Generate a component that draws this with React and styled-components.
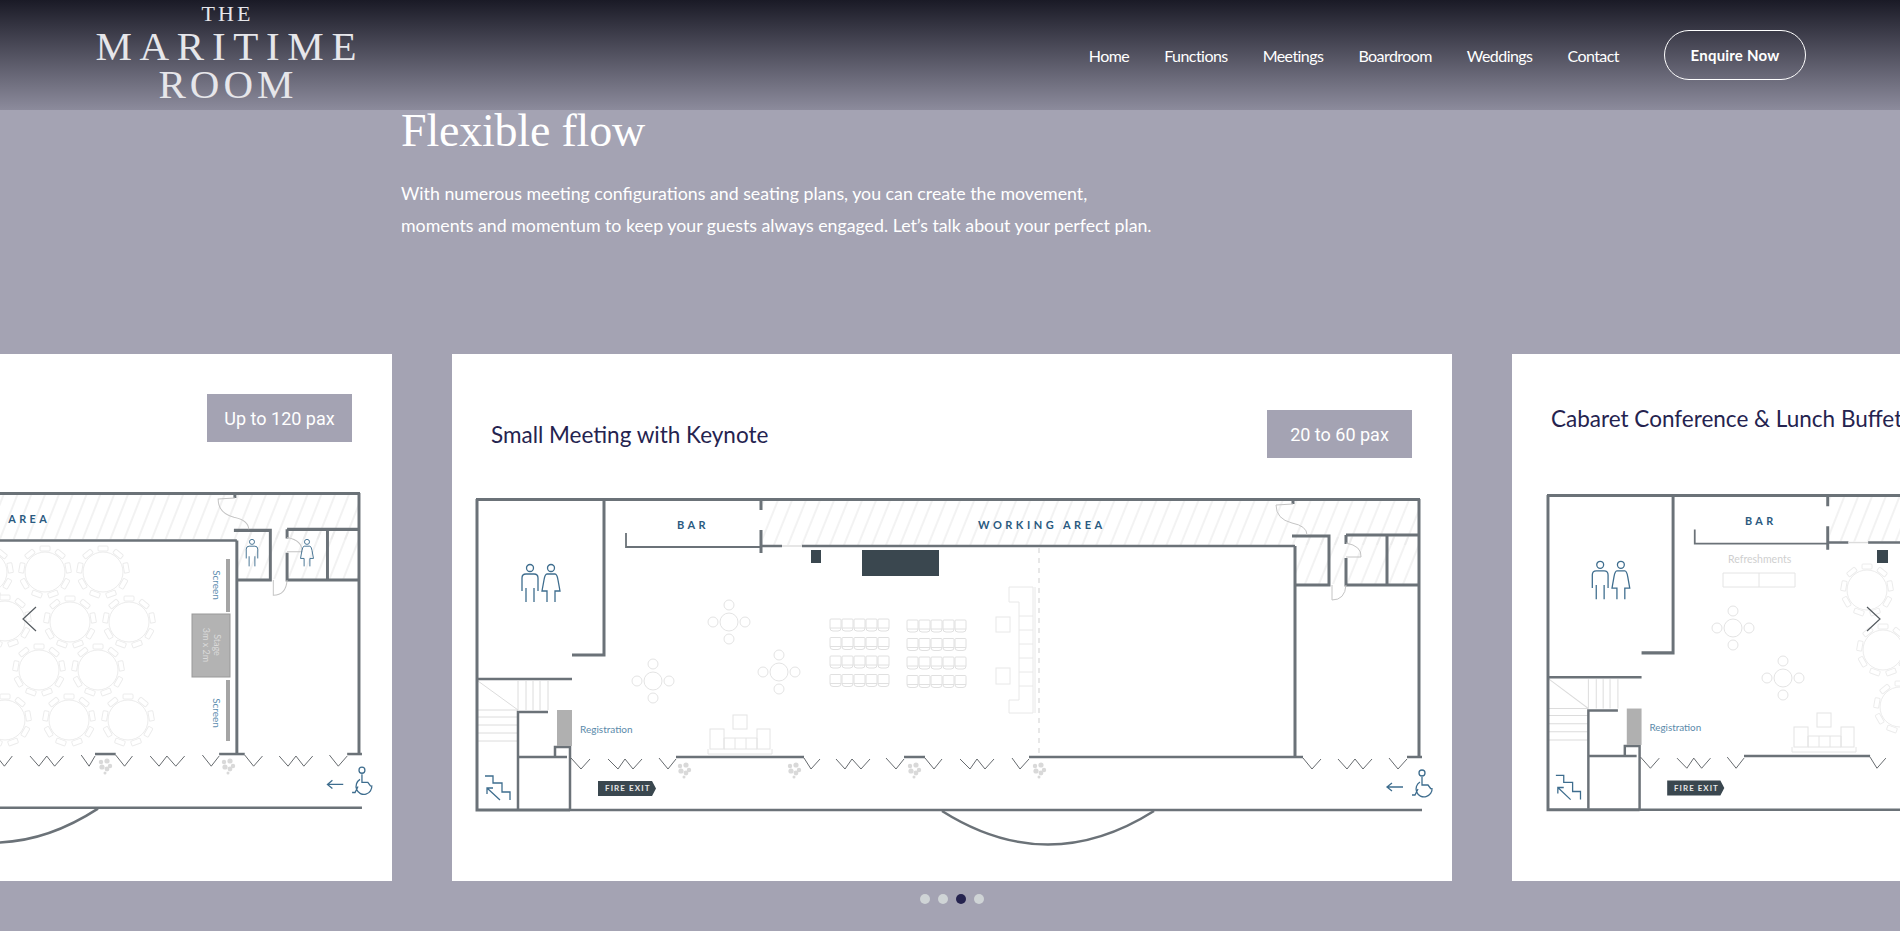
import React from 'react';
import styled, { createGlobalStyle } from 'styled-components';

const Global = createGlobalStyle`
  html, body {
    margin: 0;
    height: 931px;
    overflow: hidden;
    background: #a4a3b3;
  }
`;

const Page = styled.div`
  width: 1900px;
  height: 931px;
  overflow: hidden;
  background: #a4a3b3;
`;

const Header = styled.header`
  height: 110px;
  padding: 0 94px 0 95px;
  box-sizing: border-box;
  display: flex;
  align-items: center;
  justify-content: space-between;
  background: linear-gradient(180deg, #1a1a26 0%, #8c8b9c 100%);
`;

const Logo = styled.div`
  width: 262px;
  display: flex;
  flex-direction: column;
  align-items: center;
  font-family: "Liberation Serif", serif;
  color: #e6e6ea;
  margin-bottom: 7px;
`;

const LogoLine = styled.span`
  font-size: ${p => p.$size}px;
  line-height: ${p => p.$line}px;
  letter-spacing: ${p => p.$spacing}px;
  margin-right: -${p => p.$spacing}px;
  white-space: nowrap;
`;

const NavArea = styled.div`
  display: flex;
  align-items: center;
  gap: 45px;
`;

const Nav = styled.nav`
  display: flex;
  gap: 35px;
`;

const NavLink = styled.a`
  font-family: Lato, sans-serif;
  font-size: 16px;
  color: #fff;
  letter-spacing: -0.56px;
`;

const Enquire = styled.a`
  width: 142px;
  height: 50px;
  box-sizing: border-box;
  border: 1px solid #fff;
  border-radius: 25px;
  display: flex;
  align-items: center;
  justify-content: center;
  font-family: Lato, sans-serif;
  font-weight: 700;
  font-size: 15px;
  letter-spacing: 0.2px;
  color: #fff;
`;

const Intro = styled.section`
  height: 244px;
  padding-left: 401px;
  box-sizing: border-box;
  color: #fff;
`;

const Heading = styled.h2`
  margin: 0;
  font-family: "Liberation Serif", serif;
  font-weight: 400;
  font-size: 46px;
  line-height: 46px;
  height: 44px;
  display: flex;
  align-items: flex-end;
  letter-spacing: -0.2px;
`;

const Copy = styled.p`
  margin: 0;
  padding-top: 23px;
  font-family: Lato, sans-serif;
  font-size: 17.75px;
  line-height: 32px;
`;

const Carousel = styled.div`
  position: relative;
  display: flex;
  gap: 60px;
  margin-left: -608px;
  width: 3120px;
`;

const Card = styled.article`
  flex: 0 0 1000px;
  height: 527px;
  background: #fff;
  display: flex;
  flex-direction: column;
`;

const CardHead = styled.div`
  height: 126px;
  box-sizing: border-box;
  padding: ${p => p.$top}px 40px 0;
  display: flex;
  justify-content: space-between;
  align-items: flex-start;
`;

const CardTitle = styled.h3`
  margin: 1px 0 0 -1px;
  font-family: Lato, sans-serif;
  font-weight: 400;
  font-size: 22.5px;
  line-height: 48px;
  color: #25234f;
  white-space: nowrap;
`;

const Pax = styled.div`
  width: 145px;
  height: 48px;
  margin-left: auto;
  background: #a4a3b3;
  color: #fff;
  display: flex;
  align-items: center;
  justify-content: center;
  font-family: Roboto, sans-serif;
  font-size: 18px;
`;

const Plan = styled.svg`
  display: block;
  width: 1000px;
  height: 401px;
`;

const Walls = styled.g`
  fill: none;
  stroke: #6b7278;
  stroke-width: ${p => p.$w || 3}px;
`;

const Faint = styled.g`
  fill: none;
  stroke: ${p => p.$c || '#e4e4e4'};
  stroke-width: ${p => p.$w || 1}px;
`;

const Blue = styled.g`
  fill: none;
  stroke: #3e6d8e;
  stroke-width: 1.3px;
`;

const Label = styled.text`
  font-family: Lato, sans-serif;
  font-size: ${p => p.$size || 11}px;
  font-weight: ${p => p.$weight || 400};
  letter-spacing: ${p => p.$spacing || 0}px;
  fill: ${p => p.$c || '#2a5a80'};
  dominant-baseline: middle;
`;

const Arrow = styled.svg`
  position: absolute;
  top: 252px;
  left: ${p => p.$left}px;
  width: 16px;
  height: 26px;
  fill: none;
  stroke: #555b60;
  stroke-width: 1.2px;
`;

const Dots = styled.div`
  display: flex;
  justify-content: center;
  gap: 8px;
  padding-top: 13px;
  margin-left: 4px;
`;

const Dot = styled.span`
  width: 10px;
  height: 10px;
  border-radius: 50%;
  background: ${p => (p.$on ? '#25234f' : '#cfd4d6')};
`;

const vee = (a, b, c) => `M${a} 404L${b} 415L${c} 405`;
const wave = (a, b, c, d, e) => `M${a} 405L${b} 415L${c} 405L${d} 415L${e} 405`;

const baseDoors = [
  vee(119, 129, 138), wave(156, 166, 173, 181, 190), vee(207, 216, 224),
  vee(352, 359, 368), wave(384, 393, 400, 409, 418), vee(434, 444, 452),
  vee(473, 482, 490), wave(508, 518, 525, 533, 542), vee(560, 568, 577),
  vee(851, 860, 869), wave(886, 895, 903, 911, 920), vee(937, 946, 955),
];

const extraDoors = [
  vee(598, 607, 615), wave(633, 642, 650, 658, 667), vee(685, 693, 699),
  vee(720, 729, 737), wave(755, 764, 772, 781, 790), vee(808, 817, 825),
];

const Man = ({ x, y, s = 1 }) => (
  <g transform={`translate(${x} ${y}) scale(${s})`}>
    <circle cx="0" cy="4" r="3.5" />
    <path d="M-8 27V14q0-4 4-4h8q4 0 4 4v13M-4 38V24M4 38V24" />
  </g>
);

const Woman = ({ x, y, s = 1 }) => (
  <g transform={`translate(${x} ${y}) scale(${s})`}>
    <circle cx="0" cy="4" r="3.5" />
    <path d="M-4 10h8q2 0 3 6l2 11h-5v11M-4 10q-2 0-3 6l-2 11h5v11" />
  </g>
);

const Wheelchair = () => (
  <Blue>
    <path d="M951 433H935M940 429L935 433L940 437" />
    <circle cx="970" cy="419" r="3" />
    <path d="M970 423V431H976L979 435M968 428A8 8 0 1 0 980 434M960 441H963L966 435" />
  </Blue>
);

const FireExit = () => (
  <g>
    <path d="M146 427H200L204 434.5L200 442H146Z" fill="#3a474f" />
    <Label x="153" y="435" $size={8} $weight={700} $spacing={1.1} $c="#e8e8e8">FIRE EXIT</Label>
  </g>
);

const Stairs = () => (
  <>
    <Faint $c="#dcdcdc">
      <path d="M26 327L66 356M26 356H66M26 363H66M26 371H66M26 379H66M26 387H66" />
      <path d="M66 327V356M74 327V356M81 327V356M88 327V356M96 327V356" />
    </Faint>
    <Blue>
      <path d="M33 422H41V429H50V438H58V446M48 446L35 434M35 440V434H41" />
    </Blue>
  </>
);

const Plant = ({ x, y }) => (
  <g fill="#d9d9d9" transform={`translate(${x} ${y})`}>
    <circle cx="-4" cy="-4" r="2.2" />
    <circle cx="2" cy="-5" r="2.6" />
    <circle cx="5" cy="0" r="2.2" />
    <circle cx="-3" cy="1" r="2.6" />
    <circle cx="2" cy="3" r="2.4" />
    <circle cx="0" cy="7" r="1.5" />
  </g>
);

// walls are shared by all three layouts, only the front bay differs
const Shell = ({ id, transform, walls, doors, children }) => (
  <g transform={transform}>
    <defs>
      <pattern id={id} width="13" height="44" patternUnits="userSpaceOnUse" patternTransform="rotate(22)">
        <path d="M6 0V44" stroke="#e6e6e6" strokeWidth="1" />
      </pattern>
    </defs>
    <rect x="311" y="147" width="655" height="44" fill={`url(#${id})`} />
    <rect x="844" y="183" width="122" height="47" fill={`url(#${id})`} />
    <Stairs />
    <Walls>
      <path d="M24 145.500H968M25 145V456H118M152 145V301H120M967 145V404" />
      <path d="M309 146V156M309 176V199M894 181H966M894 181V190M894 204V231H966M935 181V231M841 146V150" />
      <path d="M843 192V404M840 182H877V231H843" />
    </Walls>
    <Walls $w={2.5}>
      <path d="M25 325H120M66 455V358H96M66 403H115M118 457V393H103V403M118 456H970" />
      <path d="M309 192H330M350 192H843" />
      <path d="M490 457Q596 524 702 457" />
      {walls.map(([a, b]) => <path key={a} d={`M${a} 403H${b}`} />)}
    </Walls>
    <Walls $w={1.8}>
      <path d="M174 179V193H309" />
    </Walls>
    <Faint $c="#55595d" $w={0.9}>
      {doors.map(d => <path key={d} d={d} />)}
    </Faint>
    <Faint $c="#c4c4c4">
      <path d="M841 150L824 151Q824 165 840 169Q855 172 855 181" />
      <path d="M894 189Q910 192 909 203H894M880 231V246Q893 246 894 231" />
    </Faint>
    <Faint $c="#dcdcdc" $w={1.4}>
      <path d="M330 192H350" />
    </Faint>
    <rect x="105" y="356" width="15" height="36" fill="#b0b0b0" />
    <Label x="128" y="376" $size={10} $c="#5a8aaa">Registration</Label>
    <Label x="225" y="172" $weight={700} $spacing={3.4}>BAR</Label>
    <Label x="526" y="172" $weight={700} $spacing={3.5}>WORKING AREA</Label>
    <Blue>
      <Man x={78} y={210} />
      <Woman x={99} y={210} />
    </Blue>
    <FireExit />
    <Wheelchair />
    {children}
  </g>
);

const MeetingTable = ({ x, y }) => (
  <Faint>
    <circle cx={x} cy={y} r="9" />
    <circle cx={x} cy={y - 17} r="5" />
    <circle cx={x} cy={y + 17} r="5" />
    <circle cx={x - 16} cy={y} r="5" />
    <circle cx={x + 16} cy={y} r="5" />
  </Faint>
);

const RoundTable = ({ x, y }) => (
  <Faint $c="#ececec">
    <circle cx={x} cy={y} r="20" />
    {[0, 40, 80, 120, 160, 200, 240, 280, 320].map(a => (
      <rect key={a} x={x - 5} y={y - 26} width="10" height="5" rx="1" transform={`rotate(${a} ${x} ${y})`} />
    ))}
  </Faint>
);

const Sofa = ({ x, y }) => (
  <Faint>
    <rect x={x + 25} y={y - 12} width="14" height="14" />
    <path d={`M${x} ${y + 22}V${y + 27}H${x + 64}V${y + 22}`} />
    <rect x={x + 2} y={y + 2} width="14" height="20" />
    <rect x={x + 49} y={y + 2} width="13" height="20" />
    <path d={`M${x + 16} ${y + 11}H${x + 49}V${y + 22}H${x + 16}ZM${x + 27} ${y + 11}V${y + 22}M${x + 38} ${y + 11}V${y + 22}`} />
  </Faint>
);

const Chairs = ({ x, y }) => (
  <Faint $c="#e0e0e0">
    {[0, 1, 2, 3].map(r => [0, 1, 2, 3, 4].map(c => (
      <path key={`${r}-${c}`} d={`M${x + c * 12 + 1} ${y + r * 18.500}h9q1 0 1 1v8q0 3-3 3h-5q-3 0-3-3v-8q0-1 1-1zM${x + c * 12} ${y + r * 18.500 + 9}h11`} />
    )))}
  </Faint>
);

const Keynote = () => (
  <>
    <rect x="359" y="196" width="10" height="13" fill="#3a474f" />
    <rect x="410" y="196" width="77" height="26" fill="#3a474f" />
    <MeetingTable x={277} y={268} />
    <MeetingTable x={201} y={327} />
    <MeetingTable x={327} y={318} />
    <Chairs x={378} y={265} />
    <Chairs x={455} y={266} />
    <Sofa x={256} y={373} />
    <Faint $c="#e8e8e8">
      <path d="M557 233H581V359H557V346H567V248H557ZM567 262H581M567 276H581M567 290H581M567 304H581M567 318H581M567 332H581M583 233V359" />
      <rect x="544" y="263" width="14" height="15" />
      <rect x="544" y="314" width="14" height="16" />
    </Faint>
    <Faint $c="#cfcfcf">
      <path d="M587 194V403" strokeDasharray="5 5" />
    </Faint>
    {[232, 342, 462, 587].map(x => <Plant key={x} x={x} y={416} />)}
  </>
);

const Banquet = () => (
  <>
    {[[595, 218], [653, 218], [711, 218], [613, 267], [678, 268], [737, 268], [647, 316], [706, 316], [613, 366], [677, 366], [736, 366]].map(([x, y]) => (
      <RoundTable key={`${x}-${y}`} x={x} y={y} />
    ))}
    <rect x="800" y="260" width="38" height="63" fill="#b3b3b3" stroke="#999" />
    <rect x="834" y="205" width="4" height="53" fill="#a5a5a5" />
    <rect x="834" y="326" width="4" height="61" fill="#a5a5a5" />
    <Label x="0" y="0" $size={10} $c="#5f8fb0" textAnchor="middle" transform="translate(824 231) rotate(90)">Screen</Label>
    <Label x="0" y="0" $size={10} $c="#5f8fb0" textAnchor="middle" transform="translate(824 359) rotate(90)">Screen</Label>
    <Label x="0" y="0" $size={9} $c="#dadada" textAnchor="middle" transform="translate(824 291) rotate(90)">Stage</Label>
    <Label x="0" y="0" $size={9} $c="#dadada" textAnchor="middle" transform="translate(813 291) rotate(90)">3m x 2m</Label>
    <Blue>
      <Man x={860} y={185} s={0.72} />
      <Woman x={915} y={185} s={0.72} />
    </Blue>
    <Plant x={713} y={412} />
    <Plant x={836} y={412} />
  </>
);

const Cabaret = () => (
  <>
    <rect x="365" y="196" width="11" height="13" fill="#3a474f" />
    <Label x="216" y="206" $size={10.5} $c="#cfcfcf">Refreshments</Label>
    <Faint>
      <path d="M211 219H283V233H211ZM247 219V233" />
    </Faint>
    <MeetingTable x={221} y={274} />
    <MeetingTable x={271} y={324} />
    <Sofa x={280} y={371} />
    <RoundTable x={355} y={236} />
    <RoundTable x={371} y={296} />
    <RoundTable x={388} y={353} />
  </>
);

const Chevron = ({ left, d }) => (
  <Arrow $left={left} viewBox="0 0 16 26">
    <path d={d} />
  </Arrow>
);

const links = ['Home', 'Functions', 'Meetings', 'Boardroom', 'Weddings', 'Contact'];

export default function App() {
  return (
    <Page>
      <Global />
      <Header>
        <Logo>
          <LogoLine $size={22} $line={27} $spacing={3}>THE</LogoLine>
          <LogoLine $size={41} $line={38} $spacing={7.7}>MARITIME</LogoLine>
          <LogoLine $size={41} $line={38} $spacing={4}>ROOM</LogoLine>
        </Logo>
        <NavArea>
          <Nav>
            {links.map(l => <NavLink key={l}>{l}</NavLink>)}
          </Nav>
          <Enquire>Enquire Now</Enquire>
        </NavArea>
      </Header>
      <Intro>
        <Heading>Flexible flow</Heading>
        <Copy>
          With numerous meeting configurations and seating plans, you can create the movement,<br />
          moments and momentum to keep your guests always engaged. Let’s talk about your perfect plan.
        </Copy>
      </Intro>
      <Carousel>
        <Card>
          <CardHead $top={40}>
            <Pax>Up to 120 pax</Pax>
          </CardHead>
          <Plan viewBox="0 126 1000 401">
            <Shell
              id="hatch-a"
              transform="matrix(.985 0 0 1.012 14.5 -7.8)"
              walls={[[224, 352], [452, 473], [577, 598], [699, 720], [825, 851], [955, 970]]}
              doors={[...baseDoors, ...extraDoors]}
            />
            <Banquet />
          </Plan>
        </Card>
        <Card>
          <CardHead $top={56}>
            <CardTitle>Small Meeting with Keynote</CardTitle>
            <Pax>20 to 60 pax</Pax>
          </CardHead>
          <Plan viewBox="0 126 1000 401">
            <Shell
              id="hatch-b"
              walls={[[224, 352], [452, 473], [577, 851], [955, 970]]}
              doors={baseDoors}
            />
            <Keynote />
          </Plan>
        </Card>
        <Card>
          <CardHead $top={40}>
            <CardTitle>Cabaret Conference &amp; Lunch Buffet</CardTitle>
          </CardHead>
          <Plan viewBox="0 126 1000 401">
            <Shell
              id="hatch-c"
              transform="matrix(.985 0 0 1.012 11.36 -5.74)"
              walls={[[224, 352], [452, 473], [577, 851], [955, 970]]}
              doors={baseDoors}
            />
            <Cabaret />
          </Plan>
        </Card>
        <Chevron left={630} d="M14 1L1 13L14 25" />
        <Chevron left={2473} d="M2 1L15 13L2 25" />
      </Carousel>
      <Dots>
        <Dot />
        <Dot />
        <Dot $on />
        <Dot />
      </Dots>
    </Page>
  );
}
